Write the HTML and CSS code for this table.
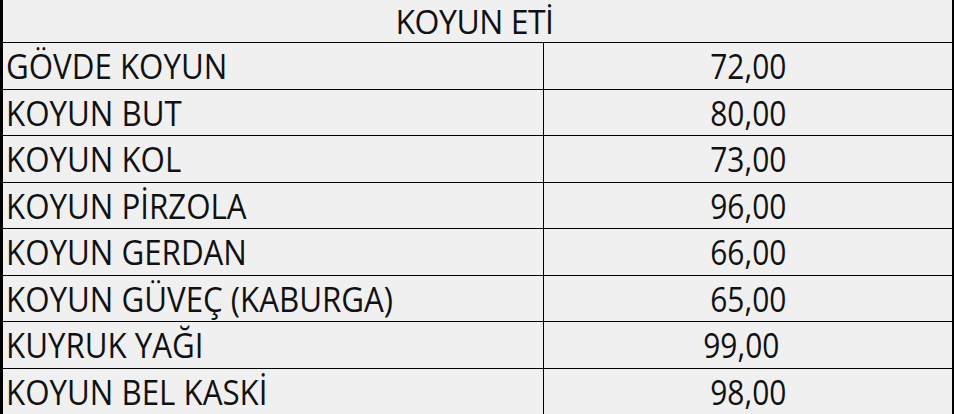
FILE: index.html
```html
<!DOCTYPE html>
<html lang="tr">
<head>
<meta charset="utf-8">
<title>Koyun Eti</title>
<link rel="stylesheet" href="styles.css">
</head>
<body>
<div class="sheet">
  <div class="head">KOYUN ETİ</div>
  <div class="row r-a"><div class="name"><span class="txt">GÖVDE KOYUN</span></div><div class="price"><span class="num">72,00</span></div></div>
  <div class="row r-b"><div class="name"><span class="txt">KOYUN BUT</span></div><div class="price"><span class="num">80,00</span></div></div>
  <div class="row r-a"><div class="name"><span class="txt">KOYUN KOL</span></div><div class="price"><span class="num">73,00</span></div></div>
  <div class="row r-b"><div class="name"><span class="txt">KOYUN PİRZOLA</span></div><div class="price"><span class="num">96,00</span></div></div>
  <div class="row r-a"><div class="name"><span class="txt">KOYUN GERDAN</span></div><div class="price"><span class="num">66,00</span></div></div>
  <div class="row r-b"><div class="name"><span class="txt">KOYUN GÜVEÇ (KABURGA)</span></div><div class="price"><span class="num">65,00</span></div></div>
  <div class="row r-a"><div class="name"><span class="txt">KUYRUK YAĞI</span></div><div class="price shift"><span class="num">99,00</span></div></div>
  <div class="row r-b"><div class="name"><span class="txt">KOYUN BEL KASKİ</span></div><div class="price"><span class="num">98,00</span></div></div>
</div>
</body>
</html>
```
FILE: styles.css
```css
html, body {
  margin: 0;
  padding: 0;
  background: #f0f0f0;
}
body {
  font-family: "Open Sans", "Noto Sans", sans-serif;
  color: #111;
  overflow: hidden;
}
.sheet {
  width: 954px;
  box-sizing: border-box;
  border-left: 3px solid #000;
  border-right: 2px solid #000;
}
.head {
  height: 42px;
  border-bottom: 1px solid #000;
  box-sizing: content-box;
  text-align: center;
  font-size: 32px;
  line-height: 44px;
  padding-right: 6px;
  letter-spacing: -0.5px;
}
.row {
  display: grid;
  grid-template-columns: 541px 1fr;
  border-bottom: 1px solid #000;
  font-size: 34px;
}
.r-a { height: 46px; }
.r-b { height: 45px; }
.name {
  border-right: 1px solid #000;
  padding-left: 3px;
  line-height: 46px;
  white-space: nowrap;
}
.txt {
  display: inline-block;
  transform: scaleX(0.92);
  transform-origin: left center;
}
.price {
  text-align: center;
  line-height: 46px;
}
.num {
  display: inline-block;
  transform: scaleX(0.88);
  transform-origin: center center;
}
.price.shift {
  padding-right: 14px;
}
```
